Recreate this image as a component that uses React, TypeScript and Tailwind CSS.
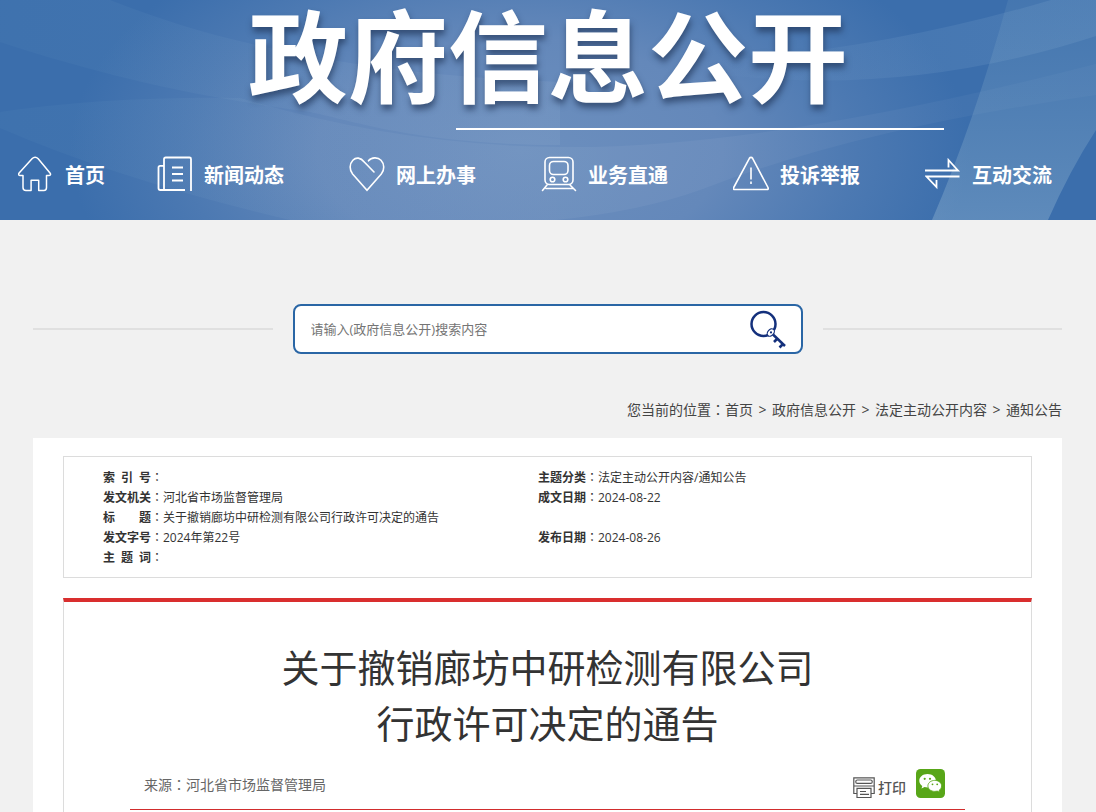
import React from "react";

const HomeIcon = () => (
  <svg className="h-9 w-9 shrink-0" viewBox="0 0 36 36" fill="none" stroke="currentColor" strokeWidth="1.5" strokeLinejoin="round" strokeLinecap="round">
    <path d="M5 19.500H2.200C.6 19.500.1 18.300 1.100 17.100L14 2.800c2-2.200 4.200-2.200 6.200 0L32 17.100c1 1.200.5 2.400-1.100 2.400H28.500V31.500c0 2-.8 3-2.600 3H20.700V24.200h-7.600V34.500H8c-2 0-3-1-3-3z" />
  </svg>
);

const NewsIcon = () => (
  <svg className="h-9 w-9 shrink-0" viewBox="0 0 36 36" fill="none" stroke="currentColor" strokeWidth="1.8" strokeLinejoin="round">
    <path d="M7 34V3.200C7 2 7.600 1.500 8.700 1.500H32.500c1 0 1.500.5 1.500 1.500V35M28 34H3.200C2 34 1.500 33.400 1.500 32.300V11.500c0-1.200.6-1.700 1.700-1.700H7" />
    <path d="M15 11.500h11M15 18h11M15 24.500h11" />
  </svg>
);

const HeartIcon = () => (
  <svg className="h-9 w-9 shrink-0" viewBox="0 0 36 36" fill="none" stroke="currentColor" strokeWidth="1.6" strokeLinecap="round">
    <path d="M25 16 15.500 6.200C11.500 1.200 7 1 3.900 4.300.3 8 .3 14 3.600 18L18 34.300 32.300 18c3.400-4 3.200-10-.3-13.700-3.200-3.400-9.500-3.200-12.500.5" />
  </svg>
);

const TrainIcon = () => (
  <svg className="h-9 w-9 shrink-0" viewBox="0 0 36 36" fill="none" stroke="currentColor" strokeWidth="1.6" strokeLinecap="round">
    <rect x="4" y="1.5" width="28" height="27" rx="4.5" />
    <rect x="8.5" y="5.5" width="18.5" height="13" rx="4" />
    <circle cx="11.5" cy="23.5" r="2.3" />
    <circle cx="24.5" cy="23.5" r="2.3" />
    <path d="M6 29 1.500 34.500M29 29l5.500 5.500M5 32.500h27" />
  </svg>
);

const WarningIcon = () => (
  <svg className="h-9 w-9 shrink-0" viewBox="0 0 36 36" fill="none" stroke="currentColor" strokeWidth="1.6" strokeLinejoin="round">
    <path d="M16.400 2.300c.8-1.200 2.400-1.200 3.200 0L35 31.500c.6 1.400.2 2-1.200 2H1.700c-1.400 0-1.700-.8-1-2z" />
    <path d="M18 11.500v12M18 25.500v2.500" />
  </svg>
);

const ExchangeIcon = () => (
  <svg className="h-9 w-9 shrink-0" viewBox="0 0 36 36" fill="none" stroke="currentColor" strokeWidth="1.8">
    <path d="M0 14.500H33L23.500 4V11.500M34.500 20.500H1.500L11.500 31V24" />
  </svg>
);

const KeyIcon = () => (
  <svg className="h-10 w-10" viewBox="0 0 40 40" fill="none" stroke="#14307c">
    <circle cx="14.5" cy="15" r="12" strokeWidth="2.5" />
    <path d="M24 25.500 36 37" strokeWidth="2.5" />
    <path d="m28.500 29.500-3.500 3.500M34 35l-3.500 3.500" strokeWidth="2.6" />
    <ellipse cx="21.800" cy="23.500" rx="3" ry="4.200" transform="rotate(40 21.800 23.500)" fill="#fff" strokeWidth="1.2" />
    <circle cx="22" cy="23.400" r="1.100" fill="#14307c" stroke="none" />
  </svg>
);

const PrinterIcon = () => (
  <svg className="h-[22px] w-[22px]" viewBox="0 0 22 22" fill="none" stroke="#555" strokeWidth="1.2">
    <path d="M4 16.500H.8V.8h20.400v15.700H18" />
    <rect x="2.800" y="3" width="16.400" height="3.400" rx="1.5" />
    <path d="M1 9h20M4 11.300h14V20.500H4zM7 14.500h6M7 17.300h9" />
  </svg>
);

const WechatIcon = () => (
  <svg className="h-[29px] w-[29px]" viewBox="0 0 29 29">
    <rect width="29" height="29" rx="4.5" fill="#58a618" />
    <path d="M11.500 5C6.800 5 3.300 7.900 3.300 11.700c0 2.200 1.200 4 3 5.200L5.500 19.500l3-1.500c1 .3 2 .4 3 .4 4.700 0 8.300-2.900 8.300-6.700S16.200 5 11.500 5z" fill="#fff" />
    <path d="M18.800 11.400c-3.900 0-6.900 2.400-6.900 5.500s3 5.500 6.900 5.500c.9 0 1.700-.1 2.500-.3l2.400 1.200-.6-2c1.500-1 2.500-2.600 2.500-4.400 0-3.100-3-5.500-6.800-5.500z" fill="#fff" stroke="#58a618" strokeWidth=".8" />
    <g fill="#58a618">
      <circle cx="8.7" cy="9.8" r="1.1" />
      <circle cx="14" cy="9.8" r="1.1" />
      <circle cx="16.5" cy="15.3" r=".9" />
      <circle cx="21.2" cy="15.3" r=".9" />
    </g>
  </svg>
);

const BannerBackground = () => (
  <svg className="absolute inset-0 h-full w-full" viewBox="0 0 1096 220" preserveAspectRatio="none" aria-hidden="true">
    <defs>
      <radialGradient id="glow" gradientUnits="userSpaceOnUse" cx="0" cy="0" r="1" gradientTransform="translate(520 150) scale(450 250)">
        <stop offset="0" stopColor="#6c8fbe" />
        <stop offset=".45" stopColor="#6488ba" />
        <stop offset=".75" stopColor="#4c79b2" />
        <stop offset="1" stopColor="#3b6eac" />
      </radialGradient>
      <linearGradient id="band" gradientUnits="userSpaceOnUse" x1="0" x2="1096">
        <stop offset="0" stopColor="#7ab0cc" stopOpacity=".06" />
        <stop offset=".5" stopColor="#fff" stopOpacity=".05" />
        <stop offset="1" stopColor="#fff" stopOpacity=".03" />
      </linearGradient>
      <linearGradient id="sweep" gradientUnits="userSpaceOnUse" x1="700" x2="1096">
        <stop offset="0" stopColor="#8ab0d5" stopOpacity="0" />
        <stop offset=".5" stopColor="#8ab0d5" stopOpacity=".14" />
        <stop offset="1" stopColor="#8ab0d5" stopOpacity=".18" />
      </linearGradient>
      <linearGradient id="beam" x1="0" x2="0" y1="0" y2="1">
        <stop offset="0" stopColor="#8fb5cc" stopOpacity=".12" />
        <stop offset="1" stopColor="#a2c2d8" stopOpacity=".34" />
      </linearGradient>
    </defs>
    <rect width="1096" height="220" fill="url(#glow)" />
    <path d="M0 0H110C230 48 380 76 560 82V145C420 145 350 120 310 112 200 97 110 78 0 42z" fill="url(#band)" />
    <path d="M0 112Q110 96 240 98 400 146 560 147 760 150 1096 64V95Q860 128 700 190 560 240 290 220 120 180 0 128z" fill="url(#band)" />
    <path d="M700 62Q900 50 1096 -14V36Q900 100 700 72z" fill="url(#sweep)" />
    <path d="M1008 0H1096V130Q1070 170 1048 220H932Q975 120 1008 0z" fill="url(#beam)" />
  </svg>
);

const navItems = [
  { label: "首页", icon: <HomeIcon /> },
  { label: "新闻动态", icon: <NewsIcon /> },
  { label: "网上办事", icon: <HeartIcon /> },
  { label: "业务直通", icon: <TrainIcon /> },
  { label: "投诉举报", icon: <WarningIcon /> },
  { label: "互动交流", icon: <ExchangeIcon /> },
];

const crumbs = ["首页", "政府信息公开", "法定主动公开内容", "通知公告"];

// Full-width colon that sits in the middle of its cell
const Colon = () => (
  <span lang="zh-TW" className="font-['Noto_Sans_CJK_TC',sans-serif] leading-none font-normal">：</span>
);

const MetaLabel = ({ children }: { children: React.ReactNode }) => (
  <th scope="row" className="p-0 text-left font-bold whitespace-nowrap">
    <span className="inline-block w-12 align-top [text-align-last:justify]">{children}</span>
    <Colon />
  </th>
);

const Header = () => (
  <header className="relative h-[220px] text-white">
    <BannerBackground />
    <div className="relative">
      <h1 className="h-32 text-center text-[100px] leading-[112px] font-bold whitespace-nowrap [text-shadow:1px_5px_6px_rgba(30,50,85,0.65)]">
        政府信息公开
      </h1>
      <div className="ml-[456px] h-0.5 w-[488px] bg-white" />
      <nav className="mt-6 grid grid-cols-[139fr_192fr_192fr_192fr_192fr_128fr] pr-[43px] pl-[18px]">
        {navItems.map((item) => (
          <a key={item.label} href="#" className="flex items-center gap-[11px] text-xl leading-9 font-bold whitespace-nowrap">
            {item.icon}
            <span className="pt-1">{item.label}</span>
          </a>
        ))}
      </nav>
    </div>
  </header>
);

const SearchBar = () => (
  <div className="flex items-center gap-5">
    <div className="h-0.5 flex-1 bg-[#e0e0e0]" />
    <form className="flex h-[50px] w-[510px] items-center rounded-lg border-2 border-[#2a66a5] bg-white pr-3 pl-4">
      <input
        type="text"
        aria-label="搜索"
        placeholder="请输入(政府信息公开)搜索内容"
        className="min-w-0 flex-1 pt-0.5 text-[13px] outline-none placeholder:text-[#757575]"
      />
      <button type="button" aria-label="搜索" className="cursor-pointer">
        <KeyIcon />
      </button>
    </form>
    <div className="h-0.5 flex-1 bg-[#e0e0e0]" />
  </div>
);

const Breadcrumb = () => (
  <nav className="mt-[46px] flex justify-end text-sm leading-5 text-[#444]">
    <span>
      您当前的位置
      <Colon />
    </span>
    {crumbs.map((name, i) => (
      <React.Fragment key={name}>
        {i > 0 && <span className="w-[19px] text-center">&gt;</span>}
        <a href="#">{name}</a>
      </React.Fragment>
    ))}
  </nav>
);

const MetaTable = () => (
  <div className="border border-[#dcdcdc] pt-[11px] pr-10 pb-[9px] pl-[39px]">
    <table className="w-full table-fixed border-collapse text-xs leading-5">
      <colgroup>
        <col className="w-[60px]" />
        <col className="w-[375px]" />
        <col className="w-[60px]" />
        <col />
      </colgroup>
      <tbody>
        <tr className="h-5">
          <MetaLabel>索 引 号</MetaLabel>
          <td className="p-0"></td>
          <MetaLabel>主题分类</MetaLabel>
          <td className="p-0">法定主动公开内容/通知公告</td>
        </tr>
        <tr className="h-5">
          <MetaLabel>发文机关</MetaLabel>
          <td className="p-0">河北省市场监督管理局</td>
          <MetaLabel>成文日期</MetaLabel>
          <td className="p-0">2024-08-22</td>
        </tr>
        <tr className="h-5">
          <MetaLabel>标 题</MetaLabel>
          <td className="p-0" colSpan={3}>关于撤销廊坊中研检测有限公司行政许可决定的通告</td>
        </tr>
        <tr className="h-5">
          <MetaLabel>发文字号</MetaLabel>
          <td className="p-0">2024年第22号</td>
          <MetaLabel>发布日期</MetaLabel>
          <td className="p-0">2024-08-26</td>
        </tr>
        <tr className="h-5">
          <MetaLabel>主 题 词</MetaLabel>
          <td className="p-0" colSpan={3}></td>
        </tr>
      </tbody>
    </table>
  </div>
);

const Article = () => (
  <article className="mt-5 flex-1 border-x border-t-4 border-x-[#dcdcdc] border-t-[#d92e2e] px-[66px] pt-[37px]">
    <h2 className="text-center text-[38px] leading-[56px]">
      关于撤销廊坊中研检测有限公司
      <br />
      行政许可决定的通告
    </h2>
    <div className="mt-[18px] flex items-start justify-between border-b border-[#d12d2d] pr-5 pb-2 pl-[14px]">
      <p className="text-sm leading-8 text-[#666]">
        来源
        <Colon />
        河北省市场监督管理局
      </p>
      <div className="flex items-start gap-[10px]">
        <button type="button" className="flex cursor-pointer items-center gap-[3px] pt-2 text-sm leading-5 font-medium text-[#555]">
          <PrinterIcon />
          打印
        </button>
        <button type="button" aria-label="微信" className="cursor-pointer">
          <WechatIcon />
        </button>
      </div>
    </div>
  </article>
);

const App = () => {
  return (
    <div className="flex min-h-screen flex-col bg-[#f1f1f1] font-['Open_Sans','Noto_Sans_CJK_SC',sans-serif] text-[#333]" lang="zh-CN">
      <Header />
      <main className="flex flex-1 flex-col pt-[84px] pr-[34px] pl-[33px]">
        <SearchBar />
        <Breadcrumb />
        <div className="mt-[18px] flex flex-1 flex-col bg-white px-[30px] pt-[18px]">
          <MetaTable />
          <Article />
        </div>
      </main>
    </div>
  );
};

export default App;
